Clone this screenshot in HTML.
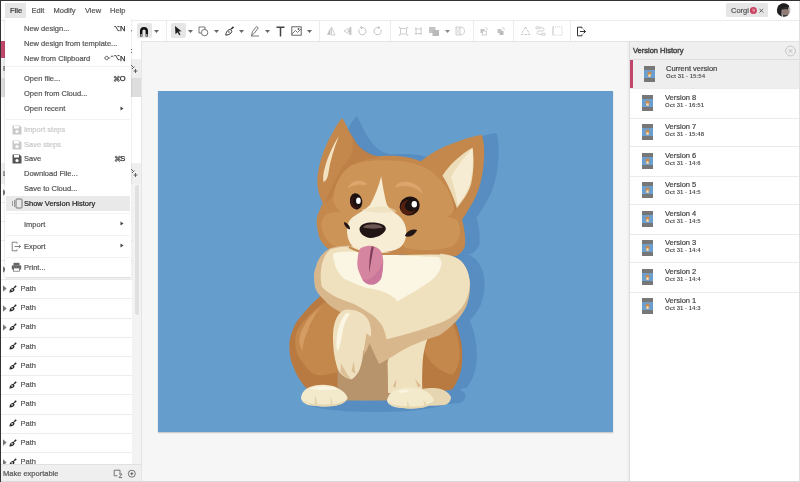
<!DOCTYPE html><html><head><meta charset="utf-8"><style>
*{margin:0;padding:0;box-sizing:border-box}
html,body{width:800px;height:482px;overflow:hidden;background:#fff;font-family:"Liberation Sans",sans-serif;color:#444}
.r{position:absolute}
.t{position:absolute;white-space:nowrap;line-height:10px;height:10px;-webkit-text-stroke:0.2px currentColor}
svg{position:absolute;overflow:visible}
</style></head><body><div id="root" style="position:absolute;left:0;top:0;width:800px;height:482px;overflow:hidden;will-change:transform">
<div class="r" style="left:0px;top:0px;width:800px;height:482px;background:#fff;"></div>
<div class="r" style="left:141px;top:41px;width:489px;height:441px;background:#f6f6f6;"></div>
<div class="r" style="left:141px;top:41px;width:1px;height:441px;background:#e6e6e6;"></div>
<div class="r" style="left:158px;top:91px;width:455px;height:341px;background:#659dcd;box-shadow:0 0.6px 1.2px rgba(0,0,0,0.22)"></div>
<div class="r" style="left:626px;top:41px;width:3px;height:441px;background:linear-gradient(to right,rgba(0,0,0,0),rgba(0,0,0,0.035));"></div>
<div class="r" style="left:141px;top:20px;width:659px;height:1px;background:#e8e8e8;"></div>
<div class="r" style="left:141px;top:41px;width:489px;height:1px;background:#e4e4e4;"></div>
<div class="r" style="left:1px;top:20px;width:799px;height:1px;background:#ececec;"></div>
<div class="r" style="left:629px;top:41px;width:170px;height:441px;background:#fff;"></div>
<div class="r" style="left:629px;top:41px;width:1px;height:441px;background:#dcdcdc;"></div>
<div class="r" style="left:630px;top:41px;width:169px;height:18px;background:#efefef;"></div>
<div class="r" style="left:630px;top:41px;width:169px;height:1px;background:#e2e2e2;"></div>
<div class="r" style="left:630px;top:59px;width:169px;height:1px;background:#dedede;"></div>
<div class="t" style="left:633px;top:46.3px;font-size:7.5px;color:#4a4a4a;font-weight:normal;-webkit-text-stroke:0.45px #4a4a4a">Version History</div>
<svg style="left:784px;top:45px" width="13" height="13" viewBox="0 0 13 13"><circle cx="6.5" cy="6" r="4.9" fill="none" stroke="#bbb" stroke-width="0.8"/><path d="M4.6 4.1L8.4 7.9M8.4 4.1L4.6 7.9" stroke="#aaa" stroke-width="0.7"/></svg>
<div class="r" style="left:630px;top:60px;width:169px;height:28px;background:#eeeeee;"></div>
<div class="r" style="left:630px;top:60px;width:3px;height:28px;background:#c0466a;"></div>
<svg style="left:644px;top:66.00px" width="11" height="16" viewBox="0 0 11 16"><rect width="11" height="16" fill="#777"/><rect y="4" width="11" height="8" fill="#6a9fd0"/><path d="M4 4.6L4.6 6H6.4L7 4.6L7.4 6.8L7.2 9.6L6.5 11H4.5L3.8 9.6L3.6 6.8Z" fill="#c98a4e"/><path d="M4.6 8.2H6.4L6.8 10.8H4.2Z" fill="#f1e3c2"/></svg>
<div class="t" style="left:666px;top:64.1px;font-size:7.5px;color:#444;font-weight:normal;">Current version</div>
<div class="t" style="left:666px;top:70.8px;font-size:6px;color:#555;font-weight:bold;-webkit-text-stroke:0">Oct 31 - 15:54</div>
<div class="r" style="left:630px;top:88px;width:169px;height:1px;background:#ebebeb;"></div>
<svg style="left:642px;top:95.00px" width="11" height="16" viewBox="0 0 11 16"><rect width="11" height="16" fill="#777"/><rect y="4" width="11" height="8" fill="#6a9fd0"/><path d="M4 4.6L4.6 6H6.4L7 4.6L7.4 6.8L7.2 9.6L6.5 11H4.5L3.8 9.6L3.6 6.8Z" fill="#c98a4e"/><path d="M4.6 8.2H6.4L6.8 10.8H4.2Z" fill="#f1e3c2"/></svg>
<div class="t" style="left:665px;top:93.1px;font-size:7.5px;color:#444;font-weight:normal;">Version 8</div>
<div class="t" style="left:665px;top:99.8px;font-size:6px;color:#555;font-weight:bold;-webkit-text-stroke:0">Oct 31 - 16:51</div>
<div class="r" style="left:630px;top:118px;width:169px;height:1px;background:#ebebeb;"></div>
<svg style="left:642px;top:124.00px" width="11" height="16" viewBox="0 0 11 16"><rect width="11" height="16" fill="#777"/><rect y="4" width="11" height="8" fill="#6a9fd0"/><path d="M4 4.6L4.6 6H6.4L7 4.6L7.4 6.8L7.2 9.6L6.5 11H4.5L3.8 9.6L3.6 6.8Z" fill="#c98a4e"/><path d="M4.6 8.2H6.4L6.8 10.8H4.2Z" fill="#f1e3c2"/></svg>
<div class="t" style="left:665px;top:122.1px;font-size:7.5px;color:#444;font-weight:normal;">Version 7</div>
<div class="t" style="left:665px;top:128.8px;font-size:6px;color:#555;font-weight:bold;-webkit-text-stroke:0">Oct 31 - 15:48</div>
<div class="r" style="left:630px;top:146px;width:169px;height:1px;background:#ebebeb;"></div>
<svg style="left:642px;top:153.00px" width="11" height="16" viewBox="0 0 11 16"><rect width="11" height="16" fill="#777"/><rect y="4" width="11" height="8" fill="#6a9fd0"/><path d="M4 4.6L4.6 6H6.4L7 4.6L7.4 6.8L7.2 9.6L6.5 11H4.5L3.8 9.6L3.6 6.8Z" fill="#c98a4e"/><path d="M4.6 8.2H6.4L6.8 10.8H4.2Z" fill="#f1e3c2"/></svg>
<div class="t" style="left:665px;top:151.10000000000002px;font-size:7.5px;color:#444;font-weight:normal;">Version 6</div>
<div class="t" style="left:665px;top:157.8px;font-size:6px;color:#555;font-weight:bold;-webkit-text-stroke:0">Oct 31 - 14:6</div>
<div class="r" style="left:630px;top:176px;width:169px;height:1px;background:#ebebeb;"></div>
<svg style="left:642px;top:182.00px" width="11" height="16" viewBox="0 0 11 16"><rect width="11" height="16" fill="#777"/><rect y="4" width="11" height="8" fill="#6a9fd0"/><path d="M4 4.6L4.6 6H6.4L7 4.6L7.4 6.8L7.2 9.6L6.5 11H4.5L3.8 9.6L3.6 6.8Z" fill="#c98a4e"/><path d="M4.6 8.2H6.4L6.8 10.8H4.2Z" fill="#f1e3c2"/></svg>
<div class="t" style="left:665px;top:180.10000000000002px;font-size:7.5px;color:#444;font-weight:normal;">Version 5</div>
<div class="t" style="left:665px;top:186.8px;font-size:6px;color:#555;font-weight:bold;-webkit-text-stroke:0">Oct 31 - 14:5</div>
<div class="r" style="left:630px;top:204px;width:169px;height:1px;background:#ebebeb;"></div>
<svg style="left:642px;top:211.00px" width="11" height="16" viewBox="0 0 11 16"><rect width="11" height="16" fill="#777"/><rect y="4" width="11" height="8" fill="#6a9fd0"/><path d="M4 4.6L4.6 6H6.4L7 4.6L7.4 6.8L7.2 9.6L6.5 11H4.5L3.8 9.6L3.6 6.8Z" fill="#c98a4e"/><path d="M4.6 8.2H6.4L6.8 10.8H4.2Z" fill="#f1e3c2"/></svg>
<div class="t" style="left:665px;top:209.10000000000002px;font-size:7.5px;color:#444;font-weight:normal;">Version 4</div>
<div class="t" style="left:665px;top:215.8px;font-size:6px;color:#555;font-weight:bold;-webkit-text-stroke:0">Oct 31 - 14:5</div>
<div class="r" style="left:630px;top:234px;width:169px;height:1px;background:#ebebeb;"></div>
<svg style="left:642px;top:240.00px" width="11" height="16" viewBox="0 0 11 16"><rect width="11" height="16" fill="#777"/><rect y="4" width="11" height="8" fill="#6a9fd0"/><path d="M4 4.6L4.6 6H6.4L7 4.6L7.4 6.8L7.2 9.6L6.5 11H4.5L3.8 9.6L3.6 6.8Z" fill="#c98a4e"/><path d="M4.6 8.2H6.4L6.8 10.8H4.2Z" fill="#f1e3c2"/></svg>
<div class="t" style="left:665px;top:238.10000000000002px;font-size:7.5px;color:#444;font-weight:normal;">Version 3</div>
<div class="t" style="left:665px;top:244.8px;font-size:6px;color:#555;font-weight:bold;-webkit-text-stroke:0">Oct 31 - 14:4</div>
<div class="r" style="left:630px;top:262px;width:169px;height:1px;background:#ebebeb;"></div>
<svg style="left:642px;top:269.00px" width="11" height="16" viewBox="0 0 11 16"><rect width="11" height="16" fill="#777"/><rect y="4" width="11" height="8" fill="#6a9fd0"/><path d="M4 4.6L4.6 6H6.4L7 4.6L7.4 6.8L7.2 9.6L6.5 11H4.5L3.8 9.6L3.6 6.8Z" fill="#c98a4e"/><path d="M4.6 8.2H6.4L6.8 10.8H4.2Z" fill="#f1e3c2"/></svg>
<div class="t" style="left:665px;top:267.1px;font-size:7.5px;color:#444;font-weight:normal;">Version 2</div>
<div class="t" style="left:665px;top:273.8px;font-size:6px;color:#555;font-weight:bold;-webkit-text-stroke:0">Oct 31 - 14:4</div>
<div class="r" style="left:630px;top:292px;width:169px;height:1px;background:#ebebeb;"></div>
<svg style="left:642px;top:298.00px" width="11" height="16" viewBox="0 0 11 16"><rect width="11" height="16" fill="#777"/><rect y="4" width="11" height="8" fill="#6a9fd0"/><path d="M4 4.6L4.6 6H6.4L7 4.6L7.4 6.8L7.2 9.6L6.5 11H4.5L3.8 9.6L3.6 6.8Z" fill="#c98a4e"/><path d="M4.6 8.2H6.4L6.8 10.8H4.2Z" fill="#f1e3c2"/></svg>
<div class="t" style="left:665px;top:296.1px;font-size:7.5px;color:#444;font-weight:normal;">Version 1</div>
<div class="t" style="left:665px;top:302.8px;font-size:6px;color:#555;font-weight:bold;-webkit-text-stroke:0">Oct 31 - 14:3</div>
<div class="r" style="left:1px;top:41px;width:140px;height:441px;background:#fff;"></div>
<div class="r" style="left:1px;top:41px;width:131px;height:18px;background:#fff;"></div>
<div class="r" style="left:1px;top:41px;width:4px;height:17px;background:#c0466a;"></div>
<div class="r" style="left:1px;top:59px;width:140px;height:18.5px;background:#efefef;"></div>
<div class="t" style="left:3px;top:63.8px;font-size:7.5px;color:#555;font-weight:normal;">Pages</div>
<div class="r" style="left:1px;top:77.5px;width:140px;height:19.2px;background:#dddddd;"></div>
<div class="r" style="left:1px;top:162.5px;width:140px;height:21px;background:#efefef;"></div>
<svg style="left:129px;top:168px" width="10" height="10" viewBox="0 0 10 10"><path d="M2 1L4.5 3.5M3 5L5.5 2.5" stroke="#555" stroke-width="0.9"/><path d="M6.5 5V9M4.5 7H8.5" stroke="#555" stroke-width="0.9"/></svg>
<svg style="left:129px;top:64px" width="10" height="10" viewBox="0 0 10 10"><path d="M2 1L4.5 3.5M3 5L5.5 2.5" stroke="#555" stroke-width="0.9"/><path d="M6.5 5V9M4.5 7H8.5" stroke="#555" stroke-width="0.9"/></svg>
<div class="r" style="left:131px;top:49px;width:1px;height:1px;background:#666;"></div>
<div class="r" style="left:131px;top:52px;width:1px;height:1px;background:#666;"></div>
<div class="t" style="left:3px;top:168.8px;font-size:7.5px;color:#555;font-weight:normal;">Layers</div>
<div class="r" style="left:1px;top:202px;width:131px;height:1px;background:#ececec;"></div>
<svg style="left:3px;top:189.0px" width="4" height="7" viewBox="0 0 4 7"><path d="M0 0.3L3.6 3.5L0 6.7Z" fill="#777"/></svg>
<svg style="left:9px;top:188.3px" width="8" height="8" viewBox="0 0 8 8"><path d="M0.4 7.6C0.5 5.8 1 4.4 2.4 3.4L4.6 2.6L5.6 4.8C5 6.4 3.6 7.3 0.4 7.6Z" fill="#2a2a2a"/><circle cx="3.1" cy="4.9" r="0.8" fill="#fff"/><path d="M5.2 2.8L7.2 0.8" stroke="#2a2a2a" stroke-width="1.5"/></svg>
<div class="t" style="left:20.5px;top:187.5px;font-size:7.5px;color:#555;font-weight:normal;">Path</div>
<div class="r" style="left:1px;top:221px;width:131px;height:1px;background:#ececec;"></div>
<svg style="left:9px;top:207.6px" width="8" height="8" viewBox="0 0 8 8"><path d="M0.4 7.6C0.5 5.8 1 4.4 2.4 3.4L4.6 2.6L5.6 4.8C5 6.4 3.6 7.3 0.4 7.6Z" fill="#2a2a2a"/><circle cx="3.1" cy="4.9" r="0.8" fill="#fff"/><path d="M5.2 2.8L7.2 0.8" stroke="#2a2a2a" stroke-width="1.5"/></svg>
<div class="t" style="left:20.5px;top:206.75px;font-size:7.5px;color:#555;font-weight:normal;">Path</div>
<div class="r" style="left:1px;top:240px;width:131px;height:1px;background:#ececec;"></div>
<svg style="left:9px;top:226.8px" width="8" height="8" viewBox="0 0 8 8"><path d="M0.4 7.6C0.5 5.8 1 4.4 2.4 3.4L4.6 2.6L5.6 4.8C5 6.4 3.6 7.3 0.4 7.6Z" fill="#2a2a2a"/><circle cx="3.1" cy="4.9" r="0.8" fill="#fff"/><path d="M5.2 2.8L7.2 0.8" stroke="#2a2a2a" stroke-width="1.5"/></svg>
<div class="t" style="left:20.5px;top:226.0px;font-size:7.5px;color:#555;font-weight:normal;">Path</div>
<div class="r" style="left:1px;top:260px;width:131px;height:1px;background:#ececec;"></div>
<svg style="left:9px;top:246.1px" width="8" height="8" viewBox="0 0 8 8"><path d="M0.4 7.6C0.5 5.8 1 4.4 2.4 3.4L4.6 2.6L5.6 4.8C5 6.4 3.6 7.3 0.4 7.6Z" fill="#2a2a2a"/><circle cx="3.1" cy="4.9" r="0.8" fill="#fff"/><path d="M5.2 2.8L7.2 0.8" stroke="#2a2a2a" stroke-width="1.5"/></svg>
<div class="t" style="left:20.5px;top:245.25px;font-size:7.5px;color:#555;font-weight:normal;">Path</div>
<div class="r" style="left:1px;top:279px;width:131px;height:1px;background:#ececec;"></div>
<svg style="left:3px;top:266.0px" width="4" height="7" viewBox="0 0 4 7"><path d="M0 0.3L3.6 3.5L0 6.7Z" fill="#777"/></svg>
<svg style="left:9px;top:265.3px" width="8" height="8" viewBox="0 0 8 8"><path d="M0.4 7.6C0.5 5.8 1 4.4 2.4 3.4L4.6 2.6L5.6 4.8C5 6.4 3.6 7.3 0.4 7.6Z" fill="#2a2a2a"/><circle cx="3.1" cy="4.9" r="0.8" fill="#fff"/><path d="M5.2 2.8L7.2 0.8" stroke="#2a2a2a" stroke-width="1.5"/></svg>
<div class="t" style="left:20.5px;top:264.5px;font-size:7.5px;color:#555;font-weight:normal;">Path</div>
<div class="r" style="left:1px;top:298px;width:131px;height:1px;background:#ececec;"></div>
<svg style="left:3px;top:285.2px" width="4" height="7" viewBox="0 0 4 7"><path d="M0 0.3L3.6 3.5L0 6.7Z" fill="#777"/></svg>
<svg style="left:9px;top:284.6px" width="8" height="8" viewBox="0 0 8 8"><path d="M0.4 7.6C0.5 5.8 1 4.4 2.4 3.4L4.6 2.6L5.6 4.8C5 6.4 3.6 7.3 0.4 7.6Z" fill="#2a2a2a"/><circle cx="3.1" cy="4.9" r="0.8" fill="#fff"/><path d="M5.2 2.8L7.2 0.8" stroke="#2a2a2a" stroke-width="1.5"/></svg>
<div class="t" style="left:20.5px;top:283.75px;font-size:7.5px;color:#555;font-weight:normal;">Path</div>
<div class="r" style="left:1px;top:318px;width:131px;height:1px;background:#ececec;"></div>
<svg style="left:3px;top:304.5px" width="4" height="7" viewBox="0 0 4 7"><path d="M0 0.3L3.6 3.5L0 6.7Z" fill="#777"/></svg>
<svg style="left:9px;top:303.8px" width="8" height="8" viewBox="0 0 8 8"><path d="M0.4 7.6C0.5 5.8 1 4.4 2.4 3.4L4.6 2.6L5.6 4.8C5 6.4 3.6 7.3 0.4 7.6Z" fill="#2a2a2a"/><circle cx="3.1" cy="4.9" r="0.8" fill="#fff"/><path d="M5.2 2.8L7.2 0.8" stroke="#2a2a2a" stroke-width="1.5"/></svg>
<div class="t" style="left:20.5px;top:303.0px;font-size:7.5px;color:#555;font-weight:normal;">Path</div>
<div class="r" style="left:1px;top:337px;width:131px;height:1px;background:#ececec;"></div>
<svg style="left:3px;top:323.8px" width="4" height="7" viewBox="0 0 4 7"><path d="M0 0.3L3.6 3.5L0 6.7Z" fill="#777"/></svg>
<svg style="left:9px;top:323.1px" width="8" height="8" viewBox="0 0 8 8"><path d="M0.4 7.6C0.5 5.8 1 4.4 2.4 3.4L4.6 2.6L5.6 4.8C5 6.4 3.6 7.3 0.4 7.6Z" fill="#2a2a2a"/><circle cx="3.1" cy="4.9" r="0.8" fill="#fff"/><path d="M5.2 2.8L7.2 0.8" stroke="#2a2a2a" stroke-width="1.5"/></svg>
<div class="t" style="left:20.5px;top:322.25px;font-size:7.5px;color:#555;font-weight:normal;">Path</div>
<div class="r" style="left:1px;top:356px;width:131px;height:1px;background:#ececec;"></div>
<svg style="left:9px;top:342.3px" width="8" height="8" viewBox="0 0 8 8"><path d="M0.4 7.6C0.5 5.8 1 4.4 2.4 3.4L4.6 2.6L5.6 4.8C5 6.4 3.6 7.3 0.4 7.6Z" fill="#2a2a2a"/><circle cx="3.1" cy="4.9" r="0.8" fill="#fff"/><path d="M5.2 2.8L7.2 0.8" stroke="#2a2a2a" stroke-width="1.5"/></svg>
<div class="t" style="left:20.5px;top:341.5px;font-size:7.5px;color:#555;font-weight:normal;">Path</div>
<div class="r" style="left:1px;top:375px;width:131px;height:1px;background:#ececec;"></div>
<svg style="left:9px;top:361.6px" width="8" height="8" viewBox="0 0 8 8"><path d="M0.4 7.6C0.5 5.8 1 4.4 2.4 3.4L4.6 2.6L5.6 4.8C5 6.4 3.6 7.3 0.4 7.6Z" fill="#2a2a2a"/><circle cx="3.1" cy="4.9" r="0.8" fill="#fff"/><path d="M5.2 2.8L7.2 0.8" stroke="#2a2a2a" stroke-width="1.5"/></svg>
<div class="t" style="left:20.5px;top:360.75px;font-size:7.5px;color:#555;font-weight:normal;">Path</div>
<div class="r" style="left:1px;top:394px;width:131px;height:1px;background:#ececec;"></div>
<svg style="left:9px;top:380.8px" width="8" height="8" viewBox="0 0 8 8"><path d="M0.4 7.6C0.5 5.8 1 4.4 2.4 3.4L4.6 2.6L5.6 4.8C5 6.4 3.6 7.3 0.4 7.6Z" fill="#2a2a2a"/><circle cx="3.1" cy="4.9" r="0.8" fill="#fff"/><path d="M5.2 2.8L7.2 0.8" stroke="#2a2a2a" stroke-width="1.5"/></svg>
<div class="t" style="left:20.5px;top:380.0px;font-size:7.5px;color:#555;font-weight:normal;">Path</div>
<div class="r" style="left:1px;top:414px;width:131px;height:1px;background:#ececec;"></div>
<svg style="left:9px;top:400.1px" width="8" height="8" viewBox="0 0 8 8"><path d="M0.4 7.6C0.5 5.8 1 4.4 2.4 3.4L4.6 2.6L5.6 4.8C5 6.4 3.6 7.3 0.4 7.6Z" fill="#2a2a2a"/><circle cx="3.1" cy="4.9" r="0.8" fill="#fff"/><path d="M5.2 2.8L7.2 0.8" stroke="#2a2a2a" stroke-width="1.5"/></svg>
<div class="t" style="left:20.5px;top:399.25px;font-size:7.5px;color:#555;font-weight:normal;">Path</div>
<div class="r" style="left:1px;top:433px;width:131px;height:1px;background:#ececec;"></div>
<svg style="left:9px;top:419.3px" width="8" height="8" viewBox="0 0 8 8"><path d="M0.4 7.6C0.5 5.8 1 4.4 2.4 3.4L4.6 2.6L5.6 4.8C5 6.4 3.6 7.3 0.4 7.6Z" fill="#2a2a2a"/><circle cx="3.1" cy="4.9" r="0.8" fill="#fff"/><path d="M5.2 2.8L7.2 0.8" stroke="#2a2a2a" stroke-width="1.5"/></svg>
<div class="t" style="left:20.5px;top:418.5px;font-size:7.5px;color:#555;font-weight:normal;">Path</div>
<div class="r" style="left:1px;top:452px;width:131px;height:1px;background:#ececec;"></div>
<svg style="left:3px;top:439.2px" width="4" height="7" viewBox="0 0 4 7"><path d="M0 0.3L3.6 3.5L0 6.7Z" fill="#777"/></svg>
<svg style="left:9px;top:438.6px" width="8" height="8" viewBox="0 0 8 8"><path d="M0.4 7.6C0.5 5.8 1 4.4 2.4 3.4L4.6 2.6L5.6 4.8C5 6.4 3.6 7.3 0.4 7.6Z" fill="#2a2a2a"/><circle cx="3.1" cy="4.9" r="0.8" fill="#fff"/><path d="M5.2 2.8L7.2 0.8" stroke="#2a2a2a" stroke-width="1.5"/></svg>
<div class="t" style="left:20.5px;top:437.75px;font-size:7.5px;color:#555;font-weight:normal;">Path</div>
<div class="r" style="left:1px;top:472px;width:131px;height:1px;background:#ececec;"></div>
<svg style="left:3px;top:458.5px" width="4" height="7" viewBox="0 0 4 7"><path d="M0 0.3L3.6 3.5L0 6.7Z" fill="#777"/></svg>
<svg style="left:9px;top:457.8px" width="8" height="8" viewBox="0 0 8 8"><path d="M0.4 7.6C0.5 5.8 1 4.4 2.4 3.4L4.6 2.6L5.6 4.8C5 6.4 3.6 7.3 0.4 7.6Z" fill="#2a2a2a"/><circle cx="3.1" cy="4.9" r="0.8" fill="#fff"/><path d="M5.2 2.8L7.2 0.8" stroke="#2a2a2a" stroke-width="1.5"/></svg>
<div class="t" style="left:20.5px;top:457.0px;font-size:7.5px;color:#555;font-weight:normal;">Path</div>
<div class="r" style="left:132px;top:184px;width:9px;height:280px;background:#f3f3f3;"></div>
<div class="r" style="left:135px;top:185px;width:4px;height:130px;background:#e0e0e0;border-radius:2px"></div>
<div class="r" style="left:1px;top:464px;width:140px;height:18px;background:#efefef;"></div>
<div class="r" style="left:1px;top:464px;width:140px;height:1px;background:#e0e0e0;"></div>
<div class="r" style="left:1px;top:481px;width:799px;height:1px;background:#d9d9d9;"></div>
<div class="t" style="left:3px;top:468.8px;font-size:7.5px;color:#555;font-weight:normal;">Make exportable</div>
<svg style="left:113px;top:469px" width="11" height="10" viewBox="0 0 11 10"><path d="M7 4.5V1.2H1.2V6.8H4.5" fill="none" stroke="#666" stroke-width="0.9"/><path d="M6 5H9L6 8.6H9.2" fill="none" stroke="#666" stroke-width="0.9"/></svg>
<svg style="left:127px;top:468.5px" width="10" height="10" viewBox="0 0 10 10"><circle cx="4.8" cy="4.7" r="3.5" fill="none" stroke="#666" stroke-width="0.9"/><path d="M4.8 3.2V6.2M3.3 4.7H6.3" stroke="#555" stroke-width="0.9"/></svg>
<div class="r" style="left:5px;top:3px;width:21px;height:15px;background:#e6e6e6;"></div>
<div class="t" style="left:10px;top:6.3px;font-size:7.5px;color:#333;font-weight:normal;">File</div>
<div class="t" style="left:31.5px;top:6.3px;font-size:7.5px;color:#555;font-weight:normal;">Edit</div>
<div class="t" style="left:53.5px;top:6.3px;font-size:7.5px;color:#555;font-weight:normal;">Modify</div>
<div class="t" style="left:85px;top:6.3px;font-size:7.5px;color:#555;font-weight:normal;">View</div>
<div class="t" style="left:110px;top:6.3px;font-size:7.5px;color:#555;font-weight:normal;">Help</div>
<div class="r" style="left:726px;top:3px;width:42px;height:14px;background:#e6e6e6;border-radius:1.5px"></div>
<div class="t" style="left:731px;top:6.3px;font-size:7.5px;color:#555;font-weight:normal;">Corgi</div>
<svg style="left:749px;top:6px" width="9" height="9" viewBox="0 0 9 9"><circle cx="4.4" cy="4.6" r="3.5" fill="#c9405f"/><path d="M3.2 3.4Q4.6 2.5 5.6 3.5Q6.1 5.2 4.2 6.4M3.4 4.6H5.2" fill="none" stroke="#f5d5dd" stroke-width="0.6"/></svg>
<svg style="left:758px;top:7px" width="7" height="7" viewBox="0 0 7 7"><path d="M1.5 1.8L5.2 5.5M5.2 1.8L1.5 5.5" stroke="#444" stroke-width="0.8"/></svg>
<svg style="left:776px;top:3px" width="15" height="15" viewBox="0 0 15 15"><defs><clipPath id="av"><circle cx="7.7" cy="7" r="6.8"/></clipPath></defs><g clip-path="url(#av)"><rect width="15" height="15" fill="#bdb8b4"/><path d="M0 0H13Q14 3 12 5Q9 4 6 6Q5 10 6 15H0Z" fill="#1f1f1f"/><ellipse cx="9.5" cy="9.5" rx="3.4" ry="4.2" fill="#8d7b74"/><path d="M6 5Q9 3.5 12.5 5L12 6.5Q9 5.5 6.5 7Z" fill="#2a2a2a"/><rect x="7" y="12" width="6" height="3" fill="#3a3a3a"/></g></svg>
<div class="r" style="left:136.5px;top:23px;width:15px;height:15px;background:#e6e6e6;border-radius:2px"></div>
<div class="r" style="left:170.5px;top:23px;width:15px;height:15px;background:#e6e6e6;border-radius:2px"></div>
<svg style="left:139px;top:25.5px" width="10" height="11" viewBox="0 0 10 11"><path d="M1 10.5V5A4 4 0 0 1 9 5V10.5H6.6V5A1.6 1.6 0 0 0 3.4 5V10.5Z" fill="#111"/><rect x="1.6" y="8.3" width="1.2" height="1.5" fill="#fff"/><rect x="7.2" y="8.3" width="1.2" height="1.5" fill="#fff"/></svg>
<svg style="left:153.5px;top:29.5px" width="5" height="3" viewBox="0 0 5 3"><path d="M0 0H5L2.5 3Z" fill="#666"/></svg>
<div class="r" style="left:166px;top:21px;width:1px;height:20px;background:#ececec;"></div>
<svg style="left:130px;top:29.5px" width="3" height="3" viewBox="0 0 3 3"><path d="M0 0H2L1 2Z" fill="#666"/></svg>
<svg style="left:173px;top:25px" width="10" height="11" viewBox="0 0 10 11"><path d="M2 1L8.5 6.2L5.6 6.6L7.5 9.6L6.3 10.3L4.5 7.3L2.5 9.3Z" fill="#1e1e1e"/></svg>
<svg style="left:188.1px;top:29.5px" width="5" height="3" viewBox="0 0 5 3"><path d="M0 0H5L2.5 3Z" fill="#666"/></svg>
<svg style="left:198px;top:26px" width="12" height="11" viewBox="0 0 12 11"><path d="M1 1H7V3.5M1 1V7H3.5" fill="none" stroke="#555" stroke-width="0.8"/><circle cx="6.6" cy="6.6" r="3.2" fill="none" stroke="#555" stroke-width="0.8"/></svg>
<svg style="left:213.5px;top:29.5px" width="5" height="3" viewBox="0 0 5 3"><path d="M0 0H5L2.5 3Z" fill="#666"/></svg>
<svg style="left:224.5px;top:26px" width="10" height="10" viewBox="0 0 10 10"><path d="M0.8 9.2C0.9 7 1.6 5.3 3.2 4.2L5.6 3.2L6.8 5.6C6.1 7.5 4.5 8.8 0.8 9.2Z" fill="none" stroke="#333" stroke-width="1"/><circle cx="3.9" cy="6" r="0.8" fill="#333"/><path d="M6.2 3L8.6 0.8" stroke="#333" stroke-width="1.6"/></svg>
<svg style="left:239.4px;top:29.5px" width="5" height="3" viewBox="0 0 5 3"><path d="M0 0H5L2.5 3Z" fill="#666"/></svg>
<svg style="left:250px;top:25px" width="10" height="12" viewBox="0 0 10 12"><path d="M1.5 10.5L2.5 6.5L6.5 1.5L8.3 2.8L4.5 8Z" fill="none" stroke="#555" stroke-width="0.8"/><path d="M1 11H9" stroke="#555" stroke-width="0.8"/></svg>
<svg style="left:264.75px;top:29.5px" width="5" height="3" viewBox="0 0 5 3"><path d="M0 0H5L2.5 3Z" fill="#666"/></svg>
<svg style="left:276px;top:25.5px" width="9" height="11" viewBox="0 0 9 11"><path d="M0.5 1.2H8.5M4.5 1.2V10.5" stroke="#444" stroke-width="1.5"/></svg>
<svg style="left:290.5px;top:26px" width="11" height="10" viewBox="0 0 11 10"><rect x="0.8" y="0.8" width="9.4" height="8.4" fill="none" stroke="#555" stroke-width="0.9"/><path d="M1 8L4.5 4.5L6.5 6.5L10 3" fill="none" stroke="#555" stroke-width="0.8"/><circle cx="7.5" cy="3" r="0.9" fill="#555"/></svg>
<svg style="left:306.5px;top:29.5px" width="5" height="3" viewBox="0 0 5 3"><path d="M0 0H5L2.5 3Z" fill="#666"/></svg>
<div class="r" style="left:318.5px;top:21px;width:1px;height:20px;background:#ececec;"></div>
<svg style="left:326px;top:26px" width="10" height="10" viewBox="0 0 10 10"><path d="M4.5 1L1 9H4.5Z" fill="#c4c4c4"/><path d="M5.5 1L9 9H5.5Z" fill="none" stroke="#c4c4c4" stroke-width="0.8"/></svg>
<svg style="left:343px;top:26px" width="10" height="10" viewBox="0 0 10 10"><path d="M8 1L1 5L8 9Z" fill="none" stroke="#c4c4c4" stroke-width="0.8"/><path d="M8 1L4.5 5L8 9Z" fill="#c4c4c4"/></svg>
<svg style="left:357px;top:26px" width="10" height="10" viewBox="0 0 10 10"><path d="M2.2 3.5A3.6 3.6 0 1 0 5 1.6" fill="none" stroke="#c4c4c4" stroke-width="1"/><path d="M5 0L5 3.2L2.5 1.6Z" fill="#c4c4c4"/></svg>
<svg style="left:373px;top:26px" width="10" height="10" viewBox="0 0 10 10"><path d="M7.8 3.5A3.6 3.6 0 1 1 5 1.6" fill="none" stroke="#c4c4c4" stroke-width="1"/><path d="M5 0L5 3.2L7.5 1.6Z" fill="#c4c4c4"/></svg>
<div class="r" style="left:390px;top:21px;width:1px;height:20px;background:#ececec;"></div>
<svg style="left:398px;top:26px" width="11" height="10" viewBox="0 0 11 10"><rect x="2.5" y="2.5" width="6" height="5.5" fill="none" stroke="#c4c4c4" stroke-width="0.8"/><circle cx="1.5" cy="1.5" r="0.8" fill="#c4c4c4"/><circle cx="9.5" cy="1.5" r="0.8" fill="#c4c4c4"/><circle cx="1.5" cy="9" r="0.8" fill="#c4c4c4"/><circle cx="9.5" cy="9" r="0.8" fill="#c4c4c4"/></svg>
<svg style="left:413px;top:26px" width="11" height="10" viewBox="0 0 11 10"><path d="M2 3H9M2 7.5H9M3 1V9M8 1V9" fill="none" stroke="#c4c4c4" stroke-width="0.8"/></svg>
<svg style="left:428px;top:25.5px" width="13" height="11" viewBox="0 0 13 11"><rect x="1" y="1" width="6.5" height="6" fill="#c4c4c4"/><rect x="4.5" y="4" width="6.5" height="6" fill="#b9b9b9"/></svg>
<svg style="left:444.5px;top:29.5px" width="5" height="3" viewBox="0 0 5 3"><path d="M0 0H5L2.5 3Z" fill="#888"/></svg>
<svg style="left:455px;top:26px" width="11" height="10" viewBox="0 0 11 10"><path d="M1 1H5V9H1ZM5 1Q9.5 1 9.5 5Q9.5 9 5 9" fill="none" stroke="#c4c4c4" stroke-width="0.8"/><path d="M1 1L5 9M5 1L1 9" stroke="#c4c4c4" stroke-width="0.5"/></svg>
<div class="r" style="left:472.5px;top:21px;width:1px;height:20px;background:#ececec;"></div>
<svg style="left:479px;top:26px" width="10" height="10" viewBox="0 0 10 10"><rect x="1.5" y="3" width="4" height="4" fill="#c4c4c4"/><rect x="3.5" y="5" width="4" height="4" fill="#fff" stroke="#c4c4c4" stroke-width="0.8"/><path d="M6 1.5Q8.5 1.5 8.5 4" fill="none" stroke="#c4c4c4" stroke-width="0.7"/></svg>
<svg style="left:496px;top:26px" width="10" height="10" viewBox="0 0 10 10"><rect x="1.5" y="3" width="4" height="4" fill="#c4c4c4"/><rect x="3.5" y="5" width="4" height="4" fill="#bbb"/><path d="M6 1.5Q8.5 1.5 8.5 4" fill="none" stroke="#c4c4c4" stroke-width="0.7"/></svg>
<div class="r" style="left:513px;top:21px;width:1px;height:20px;background:#ececec;"></div>
<svg style="left:519.5px;top:26px" width="11" height="10" viewBox="0 0 11 10"><path d="M5.5 1L1 8.5H10Z" fill="none" stroke="#c4c4c4" stroke-width="0.9" stroke-dasharray="3 1"/></svg>
<svg style="left:535px;top:26px" width="11" height="10" viewBox="0 0 11 10"><rect x="1" y="0.8" width="3" height="2" fill="none" stroke="#c4c4c4" stroke-width="0.7"/><rect x="7" y="7.2" width="3" height="2" fill="none" stroke="#c4c4c4" stroke-width="0.7"/><path d="M4 1.8H7.5Q9 1.8 9 3.5Q9 5 7.5 5H3.5Q2 5 2 6.6Q2 8.2 3.5 8.2H7" fill="none" stroke="#c4c4c4" stroke-width="0.8"/></svg>
<svg style="left:551.5px;top:26px" width="11" height="10" viewBox="0 0 11 10"><rect x="1" y="0.8" width="9" height="8.4" fill="none" stroke="#c4c4c4" stroke-width="0.8" stroke-dasharray="1 1"/><path d="M1 0.8V9.2" stroke="#c4c4c4" stroke-width="0.8"/></svg>
<div class="r" style="left:569.5px;top:21px;width:1px;height:20px;background:#ececec;"></div>
<svg style="left:576px;top:25.5px" width="11" height="11" viewBox="0 0 11 11"><path d="M6 2.5V1.2H1.5V9.8H6V8.5" fill="none" stroke="#333" stroke-width="1"/><path d="M4 5.5H9.5M7.5 3.5L9.5 5.5L7.5 7.5" fill="none" stroke="#333" stroke-width="1"/></svg>
<div class="r" style="left:0px;top:0px;width:800px;height:1px;background:#333;"></div>
<div class="r" style="left:0px;top:0px;width:1px;height:482px;background:#333;"></div>
<div class="r" style="left:799px;top:1px;width:1px;height:481px;background:#e0e0e0;"></div>
<div class="r" style="left:5px;top:18px;width:126px;height:259px;background:#fff;box-shadow:0 1px 2px rgba(0,0,0,0.18)"></div>
<div class="t" style="left:24px;top:24.05px;font-size:7.5px;color:#555;font-weight:normal;">New design...</div>
<div class="t" style="left:119.90px;top:24.05px;font-size:7.5px;color:#2a2a2a;-webkit-text-stroke:0.25px #2a2a2a">N</div>
<svg style="left:114.20px;top:25.65px" width="6" height="6" viewBox="0 0 6 6"><path d="M0.2 0.6H1.9L3.9 4.6H5.6M3.4 0.6H5.6" fill="none" stroke="#2a2a2a" stroke-width="0.85"/></svg>
<div class="t" style="left:24px;top:38.8px;font-size:7.5px;color:#555;font-weight:normal;">New design from template...</div>
<div class="t" style="left:24px;top:53.55px;font-size:7.5px;color:#555;font-weight:normal;">New from Clipboard</div>
<div class="t" style="left:119.90px;top:53.55px;font-size:7.5px;color:#2a2a2a;-webkit-text-stroke:0.25px #2a2a2a">N</div>
<svg style="left:114.20px;top:55.15px" width="6" height="6" viewBox="0 0 6 6"><path d="M0.2 0.6H1.9L3.9 4.6H5.6M3.4 0.6H5.6" fill="none" stroke="#2a2a2a" stroke-width="0.85"/></svg>
<svg style="left:109.70px;top:55.15px" width="5" height="4" viewBox="0 0 5 4"><path d="M0.8 2.2L2.1 0.7L3.4 2.2" fill="none" stroke="#2a2a2a" stroke-width="0.75"/></svg>
<svg style="left:103.90px;top:54.85px" width="6" height="6" viewBox="0 0 6 6"><path d="M0.5 3L2.6 0.9L4.7 3L2.6 5.1Z" fill="none" stroke="#2a2a2a" stroke-width="0.8"/><path d="M4.6 3H5.8" stroke="#2a2a2a" stroke-width="0.8"/></svg>
<div class="r" style="left:6px;top:66px;width:124px;height:1px;background:#f3f3f3;"></div>
<div class="t" style="left:24px;top:74.05px;font-size:7.5px;color:#555;font-weight:normal;">Open file...</div>
<div class="t" style="left:119.70px;top:74.05px;font-size:7.5px;color:#2a2a2a;-webkit-text-stroke:0.25px #2a2a2a">O</div>
<svg style="left:114.00px;top:75.65px" width="6" height="6" viewBox="0 0 6 6"><path d="M1.9 1.9H3.7V3.7H1.9Z" fill="none" stroke="#2a2a2a" stroke-width="0.8"/><circle cx="1.1" cy="1.1" r="0.85" fill="none" stroke="#2a2a2a" stroke-width="0.8"/><circle cx="4.5" cy="1.1" r="0.85" fill="none" stroke="#2a2a2a" stroke-width="0.8"/><circle cx="1.1" cy="4.5" r="0.85" fill="none" stroke="#2a2a2a" stroke-width="0.8"/><circle cx="4.5" cy="4.5" r="0.85" fill="none" stroke="#2a2a2a" stroke-width="0.8"/></svg>
<div class="t" style="left:24px;top:88.8px;font-size:7.5px;color:#555;font-weight:normal;">Open from Cloud...</div>
<div class="t" style="left:24px;top:104.39999999999999px;font-size:7.5px;color:#555;font-weight:normal;">Open recent</div>
<svg style="left:120px;top:105.6px" width="4" height="5" viewBox="0 0 4 5"><path d="M0.5 0.5L3.5 2.5L0.5 4.5Z" fill="#444"/></svg>
<div class="r" style="left:6px;top:118.5px;width:124px;height:1px;background:#f3f3f3;"></div>
<div class="t" style="left:24px;top:124.8px;font-size:7.5px;color:#c9c9c9;font-weight:normal;">Import steps</div>
<svg style="left:12px;top:124.5px" width="10" height="10" viewBox="0 0 10 10"><path d="M0.5 0.5H7.5L9.5 2.5V9.5H0.5Z" fill="#c9c9c9"/><rect x="2" y="1" width="5" height="2.5" fill="#fff"/><circle cx="5" cy="6.5" r="1.6" fill="#fff"/></svg>
<div class="t" style="left:24px;top:139.8px;font-size:7.5px;color:#c9c9c9;font-weight:normal;">Save steps</div>
<svg style="left:12px;top:139.5px" width="10" height="10" viewBox="0 0 10 10"><path d="M0.5 0.5H7.5L9.5 2.5V9.5H0.5Z" fill="#c9c9c9"/><rect x="2" y="1" width="5" height="2.5" fill="#fff"/><circle cx="5" cy="6.5" r="1.6" fill="#fff"/></svg>
<div class="t" style="left:24px;top:154.4px;font-size:7.5px;color:#555;font-weight:normal;">Save</div>
<div class="t" style="left:120.30px;top:154.40px;font-size:7.5px;color:#2a2a2a;-webkit-text-stroke:0.25px #2a2a2a">S</div>
<svg style="left:114.60px;top:156.00px" width="6" height="6" viewBox="0 0 6 6"><path d="M1.9 1.9H3.7V3.7H1.9Z" fill="none" stroke="#2a2a2a" stroke-width="0.8"/><circle cx="1.1" cy="1.1" r="0.85" fill="none" stroke="#2a2a2a" stroke-width="0.8"/><circle cx="4.5" cy="1.1" r="0.85" fill="none" stroke="#2a2a2a" stroke-width="0.8"/><circle cx="1.1" cy="4.5" r="0.85" fill="none" stroke="#2a2a2a" stroke-width="0.8"/><circle cx="4.5" cy="4.5" r="0.85" fill="none" stroke="#2a2a2a" stroke-width="0.8"/></svg>
<svg style="left:12px;top:154.1px" width="10" height="10" viewBox="0 0 10 10"><path d="M0.5 0.5H7.5L9.5 2.5V9.5H0.5Z" fill="#555"/><rect x="2" y="1" width="5" height="2.5" fill="#fff"/><circle cx="5" cy="6.5" r="1.6" fill="#fff"/></svg>
<div class="t" style="left:24px;top:169.3px;font-size:7.5px;color:#555;font-weight:normal;">Download File...</div>
<div class="t" style="left:24px;top:184.20000000000002px;font-size:7.5px;color:#555;font-weight:normal;">Save to Cloud...</div>
<div class="r" style="left:6px;top:196px;width:124px;height:14.5px;background:#e9e9e9;"></div>
<div class="t" style="left:24px;top:198.8px;font-size:7.5px;color:#222;font-weight:normal;-webkit-text-stroke:0.2px #222">Show Version History</div>
<svg style="left:11px;top:197.5px" width="12" height="11" viewBox="0 0 12 11"><rect x="5" y="1" width="6" height="9" fill="none" stroke="#666" stroke-width="0.9" rx="0.8"/><path d="M3.5 2V9M1.5 3V8" stroke="#888" stroke-width="0.8"/></svg>
<div class="r" style="left:6px;top:212.5px;width:124px;height:1px;background:#f3f3f3;"></div>
<div class="t" style="left:24px;top:219.8px;font-size:7.5px;color:#555;font-weight:normal;">Import</div>
<svg style="left:120px;top:221px" width="4" height="5" viewBox="0 0 4 5"><path d="M0.5 0.5L3.5 2.5L0.5 4.5Z" fill="#444"/></svg>
<div class="r" style="left:6px;top:235px;width:124px;height:1px;background:#f3f3f3;"></div>
<div class="t" style="left:24px;top:241.8px;font-size:7.5px;color:#555;font-weight:normal;">Export</div>
<svg style="left:120px;top:243px" width="4" height="5" viewBox="0 0 4 5"><path d="M0.5 0.5L3.5 2.5L0.5 4.5Z" fill="#444"/></svg>
<svg style="left:11px;top:241px" width="11" height="11" viewBox="0 0 11 11"><path d="M6 2.5V1.2H1.2V9.8H6V8.5" fill="none" stroke="#666" stroke-width="0.8"/><path d="M3.5 5.5H9.5M7.8 3.8L9.5 5.5L7.8 7.2" fill="none" stroke="#666" stroke-width="0.8"/></svg>
<div class="r" style="left:6px;top:256.5px;width:124px;height:1px;background:#f3f3f3;"></div>
<div class="t" style="left:24px;top:262.6px;font-size:7.5px;color:#555;font-weight:normal;">Print...</div>
<svg style="left:11px;top:261.8px" width="11" height="10" viewBox="0 0 11 10"><rect x="2.5" y="0.8" width="6" height="2.5" fill="#666"/><rect x="0.8" y="3.2" width="9.4" height="4.5" rx="1" fill="#666"/><rect x="2.5" y="6" width="6" height="3.2" fill="#fff" stroke="#666" stroke-width="0.7"/></svg>
<svg style="left:0;top:0" width="800" height="482" viewBox="0 0 800 482">
<defs><clipPath id="ab"><rect x="158" y="91" width="455" height="341"/></clipPath></defs>
<g clip-path="url(#ab)">
<rect x="158" y="91" width="455" height="341" fill="#659dcd"/>
<g transform="translate(14.5,-1.8)" fill="#578dc0"><path d="M342.2 118 C345 122 350 134 356 143 C362 151 370 156.5 380 156.2 C392 155 408 156 421 161.3 C426 157 434 151 446 146 C458 141 472 136 482 134.9 C485 145 484.5 158 483 170 C481 185 476 198 470 207 C467 212 465 216 462 219.5 C465 230 466 242 464.6 247.3 C462 252 459 255 456 256 L330 250 C324 246 319 240 318 232 C316 224 316 216 320 210 C321 206 322 204 323 203.4 C319 196 317 188 317.3 180 C318 165 324 147 333 132 C336 126 340 120 342.2 118 Z"/><path d="M330.5 248 C340 245 352 245 360 246 L401 255 C412 253.5 426 252.5 438 253.2 C448 254 456 256.5 461 261 C466 266 469 273 469.8 282 C470.5 292 469 300 466 307 C462 316 452 327 440 335 C425 340 408 346 396 354.2 C390 358 383 362 379.2 364 C375 356 372 348 368 340 C362 328 350 318 340 312 C333 308 327 304 323.7 299.4 C318 294 314.5 289 314.5 283.4 C313.5 277 314 271 315.7 267.4 C318 258 323 252 330.5 248 Z"/><path d="M322 294.4 C316 300 310 305 306.8 309.6 C302 315 297.5 320 294.8 324.9 C291 333 289.5 340 289.4 344.5 C289.3 352 290 357 291.5 361.9 C293.5 368 295.5 372 298 377 C301 382 304 386 308 390 C314 395 322 399 338 400.5 L345 400.5 L345 300 Z"/><path d="M415 333 L454.7 321 C458 328 460 336 461.5 344 C462.5 352 462.5 360 461.5 368 C460 376 457 383 452.2 389.6 L420 395 Z"/><path d="M338 330 L390 330 L392 400.5 L337.5 400.5 Z"/><path d="M301 397.5 C302 392 305 389 310 387 C314 385.5 318 384.75 322.75 384.75 C328 384.75 333 385.5 337 387.75 C342 390 346 393.5 347.5 397.5 C347.5 402 340 406.5 325 406.5 C316 406.5 309 405.5 306.25 404.25 C302.5 402.5 301 400 301 397.5 Z"/><path d="M387 400 C388 396 390 393 393 391 C398 388.5 404 387.5 410 387.5 C420 387.5 430 391 434 400 C434 404 426 408.5 412 408.5 C402 408.5 395 407.5 392 406 C389 404.5 387 402.5 387 400 Z"/><path d="M418 390 C422 388.5 428 388 434 388 C442 388.5 448 391 451 397 C451 401 448 404.5 444 405 C436 406 428 406 420 405 Z"/></g>
<path d="M305 404 C330 402 380 400 460 396 C455 404 430 410 400 411.5 C360 413 320 411 305 404 Z" fill="#578dc0"/>
<path d="M322 294.4 C316 300 310 305 306.8 309.6 C302 315 297.5 320 294.8 324.9 C291 333 289.5 340 289.4 344.5 C289.3 352 290 357 291.5 361.9 C293.5 368 295.5 372 298 377 C301 382 304 386 308 390 C314 395 322 399 338 400.5 L345 400.5 L345 300 Z" fill="#b97a42"/>
<path d="M323 303 C312 312 300 323 296 333.6 C293.5 345 296.5 356 302.4 361.9 C307 369 312 374 317.7 375 C325 376 330 374 335 372.8 L345 372 L345 303 Z" fill="#c4874c"/>
<path d="M322 306.3 C314 312 308 318 304.6 324.9 C301 331 299.2 336 299.2 340 C299.5 345 300.5 348 302.4 351 C303 345 304 339 306.8 333.6 C309 327 311 322 313.3 318.3 C316 313 319 309 322 306.3 Z" fill="#d49c62"/>
<path d="M415 333 L454.7 321 C458 328 460 336 461.5 344 C462.5 352 462.5 360 461.5 368 C460 376 457 383 452.2 389.6 L420 395 Z" fill="#b97a42"/>
<path d="M424 330 L452 322 C457 333 460 345 459.8 355 C459 364 456 371 452.5 375 C440 372 428 362 424 350 Z" fill="#c4874c"/>
<path d="M338 330 L390 330 L392 400.5 L337.5 400.5 Z" fill="#b8946d"/>
<path d="M387.5 364 C389 352 393 345 400 341 C410 337 420 334 431 331 C426 340 423 352 422.5 365 C422 375 422 385 422.5 392 L388 393 C388 383 388 372 387.5 364 Z" fill="#efe1be"/>
<path d="M342.2 118 C345 122 350 134 356 143 C362 151 370 156.5 380 156.2 C392 155 408 156 421 161.3 C426 157 434 151 446 146 C458 141 472 136 482 134.9 C485 145 484.5 158 483 170 C481 185 476 198 470 207 C467 212 465 216 462 219.5 C465 230 466 242 464.6 247.3 C462 252 459 255 456 256 L330 250 C324 246 319 240 318 232 C316 224 316 216 320 210 C321 206 322 204 323 203.4 C319 196 317 188 317.3 180 C318 165 324 147 333 132 C336 126 340 120 342.2 118 Z" fill="#c4874c"/>
<path d="M350 130 C353 138 354 146 352 153.6 C349 160 345 164 342 167.5 C336 178 330 190 325 203 C328 200 331 197 333 195 C335 183 342 172 352 165 C362 160 372 158 380 157 C372 155 364 151 358 145 C355 141 352 135 350 130 Z" fill="#b97a42" opacity="0.55"/>
<path d="M339 136 C333 145 327.5 157 324.5 169 C323.2 174 322.8 178 323.5 182 C326 181 327.5 178 328.3 174 C330 161 334 148 339 136 Z" fill="#f2e2c0"/>
<path d="M438 182 C446 190 452 200 457 209 C452 214 447 216 441 218 C438 206 437 194 438 182 Z" fill="#b97a42" opacity="0.6"/>
<path d="M472.5 147.5 C460 155 449 165 442.4 175.8 C448 184 453 196 457 208 C465 198 470 190 471.5 182 C474 170 474 158 472.5 147.5 Z" fill="#ecdcb8"/>
<path d="M472.5 148.5 C463 158 456 168 451 177 C454 186 456 195 457.8 204.5 C465 196 469 189 470.5 181 C473 170 473.5 158 472.5 148.5 Z" fill="#f6ecd3"/>
<path d="M333 200 C334 186 340 172 352 165 C365 160.5 375 160.3 383.5 160.3 C402 160.3 420 163 432 172 C444 181 452 194 454.3 209.4 C452 216 444 220 425 222 L350 219 C342 215 335 208 333 200 Z" fill="#cd9458"/>
<path d="M321.5 224 C322 215 329 211.5 338 212 C349 213 357 221 357 232 C357 242 350 248 340 248 C329 246 321.5 236 321.5 224 Z" fill="#cd9458"/>
<path d="M398 224 C416 214 444 213 457 220 C462 228 461 239 453 246 C441 251 421 251 405 248 C398 240 395 230 398 224 Z" fill="#cd9458"/>
<path d="M347.5 188.5 C349.5 183.5 354 180.8 358.5 180.8 C362 180.8 365.5 182 367.2 184.2 C365 185.5 362 184.6 358.5 184.8 C354.5 185 351 186.5 347.5 188.5 Z" fill="#dca56c"/>
<path d="M394.5 187.5 C397 183 401.5 181.6 406.5 181.8 C414 182.2 420.5 186.5 423 193.8 C420 192 417 188.5 412 187 C406 185.5 400 186 394.5 187.5 Z" fill="#dca56c"/>
<path d="M330.5 248 C340 245 352 245 360 246 L401 255 C412 253.5 426 252.5 438 253.2 C448 254 456 256.5 461 261 C466 266 469 273 469.8 282 C470.5 292 469 300 466 307 C462 316 452 327 440 335 C425 340 408 346 396 354.2 C390 358 383 362 379.2 364 C375 356 372 348 368 340 C362 328 350 318 340 312 C333 308 327 304 323.7 299.4 C318 294 314.5 289 314.5 283.4 C313.5 277 314 271 315.7 267.4 C318 258 323 252 330.5 248 Z" fill="#d8b78d"/>
<path d="M331 249 C340 246 352 246 360 247 L401 256 C412 254.5 426 253.5 438 254.2 C448 254 456 256.5 461 261 C466 266 469 273 469.8 282 C470 291 467.5 300 461 308.7 C455 315.5 448 320 440 323.1 C425 328.5 405 335.5 386.5 339.2 C385.5 334 384 329 382 325.5 C378 319.5 374 316 370 313.5 C365 310 360 307 355 304.5 C346 301 339 299 334 296 C328 292 323 289 321.6 285.7 C320.5 279 320.5 274 321 269.7 C322 261 325 253 331 249 Z" fill="#efe1be"/>
<path d="M332.8 253.7 C340 251 350 251 360 252 C380 254 410 256 437.9 257 C441 259 442 262 441.3 265 C440 271 437 275 433.3 278.8 C427 284 420 288 412.7 292.5 C406 296 401 299 397.9 301.6 C396 299 393 297 390 294.8 C383 291 375 289 367 288 C358 285 350 282 344.2 278.8 C340 275 336 270 335.1 265 C334 261 333 257 332.8 253.7 Z" fill="#fbf6e3"/>
<path d="M348 309.5 C356 309.5 363 313 367 318 C370.5 323 371.5 330 371 337 L366.6 333.6 C368 341 366 347 363 352 C363 358 361.5 365 359 371 C356 376 353 379.3 350.8 379.3 C346 378 341 375 338.7 371 C335 363 333 350 333 337.3 C333 327 335 318 340 313 C342.5 310.5 345 309.5 348 309.5 Z" fill="#efe1bf"/>
<path d="M346.5 313 C341 318.5 337.6 328 336.6 339 C336.2 344 336.4 348.5 337.6 352 C340 347 341.2 340 342.4 333 C343.5 325 346 318.5 350 314 Z" fill="#fbf6e3"/>
<path d="M366.6 333.6 L371 337 C370 344 367 350 363 356 C364 350 365 342 366.6 333.6 Z" fill="#d8b78d"/>
<path d="M341 363 C344 369 347 374 350.8 379.3 C347 378.5 343.5 376 340.5 372 Z M353.5 361 L355.5 373.5 L351.5 371.5 Z" fill="#dcc097"/>
<path d="M349 247 C355 250 358 251.5 362 252 L382 254 C395 254 420 253 440 253.5" fill="none" stroke="#c4874c" stroke-width="2.2"/>
<path d="M381.2 176.3 C383 188 385 198 387 205 C390 210 396 213 400 217 C405 222 406.5 228 406.3 233 C406 240 404 244 400 247.5 C394 251 388 252 383 252 C372 252 360 250 353 246.5 C349 243 347 237 347 230 C347 225 349 220 353 217 C358 213.5 365 210 370 205 C375 196 379 186 381.2 176.3 Z" fill="#f6edd4"/>
<path d="M361 209.5 C368 208 375 206.5 381 206.5 C388 206.5 393 208 397 211.6 C392 212.5 388 212.5 382 212.5 C374 212.5 366 212 361 209.5 Z" fill="#ecdcb8" opacity="0.6"/>
<ellipse cx="356.1" cy="201.4" rx="6.2" ry="8.2" fill="#1c1210" transform="rotate(-10 356.1 201.4)"/>
<ellipse cx="355.4" cy="202.3" rx="4.6" ry="6.4" fill="#3a1712" transform="rotate(-10 355.4 202.3)"/>
<ellipse cx="356.6" cy="201.2" rx="3.8" ry="5.6" fill="#1c1210" transform="rotate(-10 356.6 201.2)"/>
<ellipse cx="358.4" cy="200.7" rx="2.3" ry="3.3" fill="#fff"/>
<ellipse cx="409.7" cy="206" rx="10.2" ry="9.4" fill="#1c1210" transform="rotate(-25 409.7 206)"/>
<ellipse cx="408.2" cy="207.4" rx="7.8" ry="7.2" fill="#55200f" transform="rotate(-25 408.2 207.4)"/>
<ellipse cx="411.2" cy="205.4" rx="6.4" ry="6" fill="#1c1210" transform="rotate(-25 411.2 205.4)"/>
<ellipse cx="414.3" cy="204.3" rx="2.7" ry="3.3" fill="#fff"/>
<path d="M359.5 228.8 C360 224.5 366 222.6 372 222.6 C380 222.6 386 225 385.8 229 C385.5 233 378 237.9 370.5 237.9 C364.5 237.9 359.2 233 359.5 228.8 Z" fill="#221515"/>
<path d="M363 227.2 C365 224.8 369 224.2 372.5 224.2 C378 224.2 382 225.5 382.5 227.8 C377 229 368 229 363 227.2 Z" fill="#6d5652"/>
<path d="M344.3 222.6 C346.8 223 349.5 225.5 349.6 229 C347 228.5 344.8 226 344.3 222.6 Z" fill="#221515" stroke="#221515" stroke-width="0.9"/>
<path d="M405.8 235.6 C407.5 232 411.5 230 416.2 230.4 C414 234 410 236.6 405.8 235.6 Z" fill="#221515" stroke="#221515" stroke-width="1.5" stroke-linejoin="round"/>
<path d="M360.4 248.3 C364 246 368 245.7 370.7 245.7 C375 246 379 248 381.1 251.4 C383 256 383.5 260 383.2 263.9 C383 270 382 275 381.1 278.4 C379 282 375 284.6 371.8 284.6 C367 284.6 364 282 362.4 279.4 C359 273 357 268 357.3 262.8 C357.5 257 358.5 251 360.4 248.3 Z" fill="#d685a0"/>
<path d="M383 262 C383 270 382 275 381.1 278.4 C379 282 375 284.6 371.8 284.6 C367 284.6 364 282 362.4 279.4 C368 281 376 278 383 262 Z" fill="#c8739a" opacity="0.8"/>
<path d="M371.8 246.2 C370 252 369 262 369.2 273.2 C370.5 265 372 255 373.8 247 Z" fill="#7d3c58"/>
<path d="M301 397.5 C302 392 305 389 310 387 C314 385.5 318 384.75 322.75 384.75 C328 384.75 333 385.5 337 387.75 C342 390 346 393.5 347.5 397.5 C347.5 402 340 406.5 325 406.5 C316 406.5 309 405.5 306.25 404.25 C302.5 402.5 301 400 301 397.5 Z" fill="#f3e9cb"/>
<path d="M310 388.5 C316 385.5 330 385.5 338 389 C330 390.5 318 390.5 310 388.5 Z" fill="#faf4e2"/>
<path d="M302 400 C305 404 316 406.5 325 406.5 C338 406.5 346 403 347.5 398 C344 402.5 336 404.5 325 404.5 C314 404.5 306 403 302 400 Z" fill="#e6d6ae"/>
<path d="M315.5 396 C314.5 399 314.5 402 315.5 405 L317 405 C316.5 402 316.5 399 315.5 396 Z" fill="#e2d1a8"/>
<path d="M330.5 397 C332 399.5 332.5 402 332 404.5 L330.5 404.5 C331 402 331 399.5 330.5 397 Z" fill="#e2d1a8"/>
<path d="M418 390 C422 388.5 428 388 434 388 C442 388.5 448 391 451 397 C451 401 448 404.5 444 405 C436 406 428 406 420 405 Z" fill="#e6d7b2"/>
<path d="M393 386 L396.5 379 L395.5 388 Z M418 387 L415 379 L421 386 Z" fill="#d9b98f"/>
<path d="M387 400 C388 396 390 393 393 391 C398 388.5 404 387.5 410 387.5 C420 387.5 430 391 434 400 C434 404 426 408.5 412 408.5 C402 408.5 395 407.5 392 406 C389 404.5 387 402.5 387 400 Z" fill="#f3e9cb"/>
<path d="M398 391.5 C401 389.5 406 389.5 410 390.5 C406 393 401 393.5 398 391.5 Z" fill="#faf4e2"/>
<path d="M388 402 C391 406 400 408.5 412 408.5 C425 408.5 433 405 434 400.5 C430 404.5 422 406.5 412 406.5 C400 406.5 392 405 388 402 Z" fill="#e6d6ae"/>
<path d="M407 401 C408.5 403 409 405 408.5 407.5 L407 407.5 C407.5 405 407.5 403 407 401 Z M423 400 C425 401.5 426 403.5 426 405.5 L424.5 405.5 C424.5 403.5 424 401.5 423 400 Z" fill="#e2d1a8"/>
</g></svg>
</div></body></html>
